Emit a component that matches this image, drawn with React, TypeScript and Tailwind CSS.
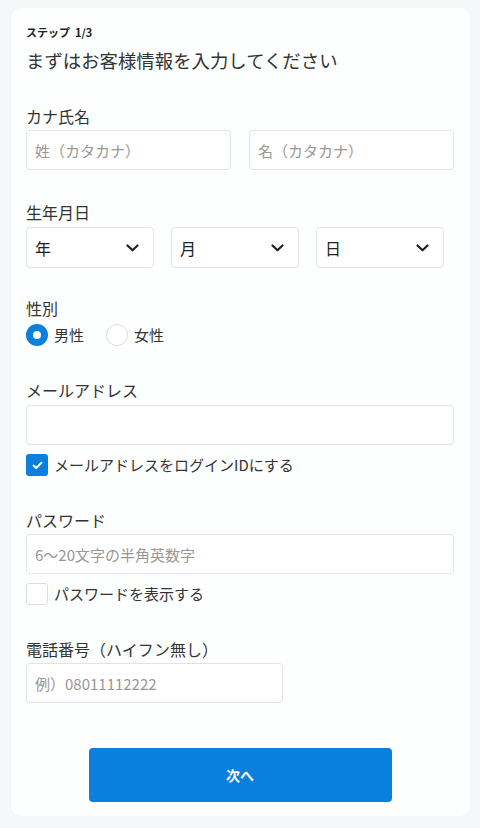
import React from "react";

const font = { fontFamily: '"Noto Sans CJK JP", "Noto Sans", sans-serif' };

function Label({ children }: { children: React.ReactNode }) {
  return <div className="text-[16px] leading-6 text-[#333]">{children}</div>;
}

function TextInput({ placeholder, className = "" }: { placeholder?: string; className?: string }) {
  return (
    <input
      placeholder={placeholder}
      className={`h-10 rounded-[4px] border border-[#e3e3e3] bg-white px-[8px] text-[15px] text-[#333] outline-none placeholder:text-[#9b9693] ${className}`}
    />
  );
}

function SelectBox({ label }: { label: string }) {
  return (
    <div className="flex h-[41px] w-[128px] items-center justify-between rounded-[4px] border border-[#e3e3e3] bg-white pl-[8px] pr-[14px]">
      <span className="text-[16px] text-[#222]">{label}</span>
      <svg width="13" height="8" viewBox="0 0 13 8" fill="none">
        <path d="M1.5 1.5 L6.5 6.3 L11.5 1.5" stroke="#1f1f33" strokeWidth="2.2" strokeLinecap="round" strokeLinejoin="round" />
      </svg>
    </div>
  );
}

function Radio({ checked, label }: { checked?: boolean; label: string }) {
  return (
    <label className="flex h-[22px] items-center gap-[6px]">
      {checked ? (
        <span className="flex h-[22px] w-[22px] items-center justify-center rounded-full bg-[#0a7fdb]">
          <span className="h-[8px] w-[8px] rounded-full bg-white" />
        </span>
      ) : (
        <span className="h-[22px] w-[22px] rounded-full border border-[#dcdcdc] bg-white" />
      )}
      <span className="text-[15px] leading-[22px] text-[#333]">{label}</span>
    </label>
  );
}

function Check({ checked, label }: { checked?: boolean; label: string }) {
  return (
    <label className="flex h-[22px] items-center gap-[6px]">
      {checked ? (
        <span className="flex h-[22px] w-[22px] items-center justify-center rounded-[3px] bg-[#0a7fdb]">
          <svg width="11" height="9" viewBox="0 0 11 9" fill="none">
            <path d="M1.5 4.6 L4.2 7 L9.5 1.8" stroke="white" strokeWidth="2" strokeLinecap="round" strokeLinejoin="round" />
          </svg>
        </span>
      ) : (
        <span className="h-[22px] w-[22px] rounded-[3px] border border-[#dcdcdc] bg-white" />
      )}
      <span className="text-[15px] leading-[22px] text-[#333]">{label}</span>
    </label>
  );
}

export default function App() {
  return (
    <div className="min-h-[828px] bg-[#f5f6f8] pt-2 pb-3" style={font}>
      <div className="ml-[11px] w-[459px] rounded-[10px] bg-[#fdfefe] pb-[14px] pl-[15px] pr-[16px] pt-4">
        <p className="text-[11px] font-bold leading-4 text-[#222]">
          ステップ&nbsp;&nbsp;1/3
        </p>
        <h1 className="mt-[6px] text-[18.4px] leading-7 text-[#333]">
          まずはお客様情報を入力してください
        </h1>

        <section className="mt-[30px]">
          <Label>カナ氏名</Label>
          <div className="mt-[2px] grid grid-cols-2 gap-[18px]">
            <TextInput placeholder="姓（カタカナ）" className="w-full" />
            <TextInput placeholder="名（カタカナ）" className="w-full" />
          </div>
        </section>

        <section className="mt-[30px]">
          <Label>生年月日</Label>
          <div className="mt-[3px] flex gap-[17px]">
            <SelectBox label="年" />
            <SelectBox label="月" />
            <SelectBox label="日" />
          </div>
        </section>

        <section className="mt-[28px]">
          <Label>性別</Label>
          <div className="mt-[4px] flex items-center gap-[22px]">
            <Radio checked label="男性" />
            <Radio label="女性" />
          </div>
        </section>

        <section className="mt-[32px]">
          <Label>メールアドレス</Label>
          <TextInput className="mt-[3px] w-full" />
          <div className="mt-[9px]">
            <Check checked label="メールアドレスをログインIDにする" />
          </div>
        </section>

        <section className="mt-[32px]">
          <Label>パスワード</Label>
          <TextInput placeholder="6〜20文字の半角英数字" className="mt-[2px] w-full" />
          <div className="mt-[9px]">
            <Check label="パスワードを表示する" />
          </div>
        </section>

        <section className="mt-[32px]">
          <Label>電話番号（ハイフン無し）</Label>
          <TextInput placeholder="例）08011112222" className="mt-[2px] w-[257px]" />
        </section>

        <div className="mt-[45px] flex justify-center">
          <button className="h-[54px] w-[303px] rounded-[4px] bg-[#0a7fdb] text-[14px] font-bold text-white">
            次へ
          </button>
        </div>
      </div>
    </div>
  );
}
